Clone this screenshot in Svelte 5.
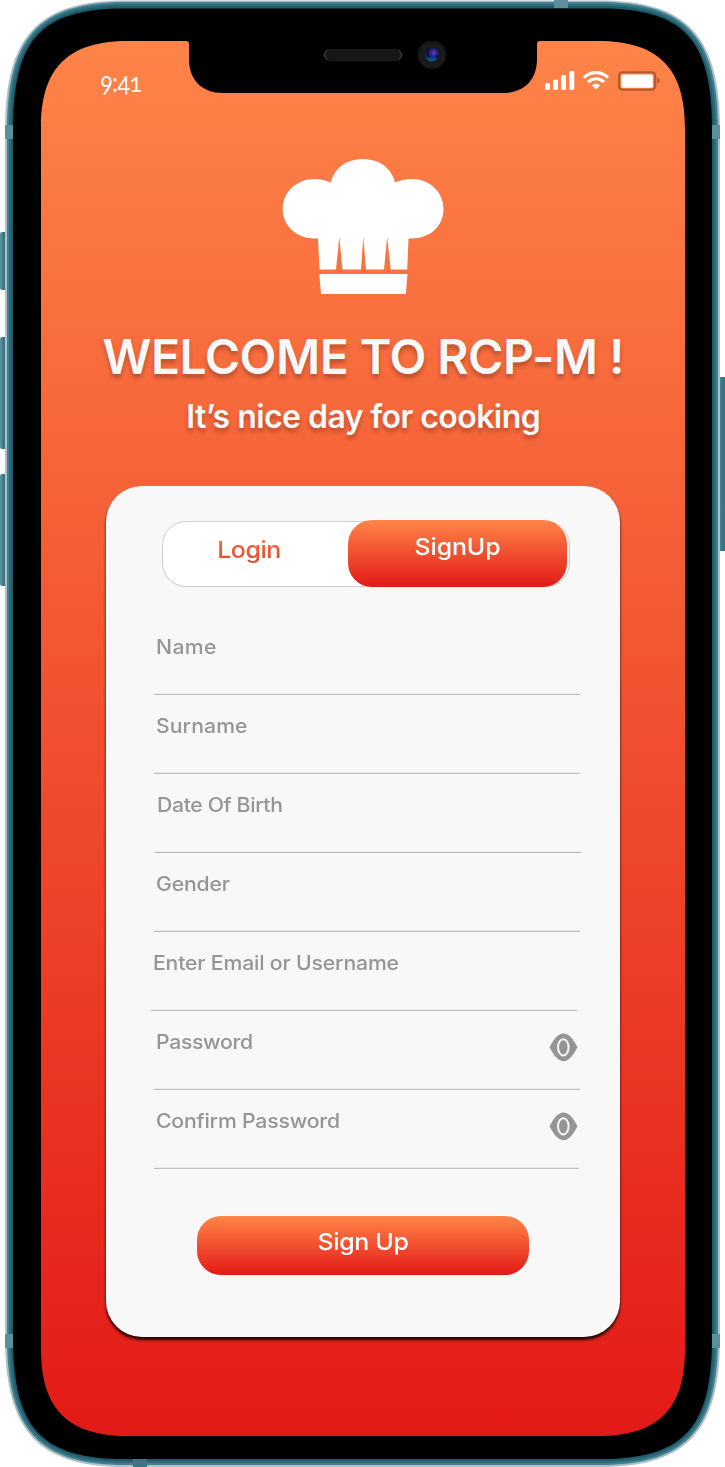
<script>
  const fields = [
    { label: 'Name', width: 60.5, shift: 0 },
    { label: 'Surname', width: 91.5, shift: 0 },
    { label: 'Date Of Birth', width: 126, shift: 1 },
    { label: 'Gender', width: 74, shift: 0 },
    { label: 'Enter Email or Username', width: 246, shift: -3 },
    { label: 'Password', width: 97, shift: 0, secret: true },
    { label: 'Confirm Password', width: 184, shift: 0, secret: true, short: true }
  ];

  // Spreads the letters of a label so that it takes up the given width,
  // after widening or narrowing the glyphs themselves by the stretch factor.
  function track(node, { width, stretch = 1 }) {
    const natural = node.getBoundingClientRect().width;
    const gap = (width / stretch - natural) / (node.textContent.length - 1);
    node.style.letterSpacing = gap + 'px';
    node.style.marginRight = -gap + 'px';
    if (stretch !== 1) node.style.transform = `scaleX(${stretch})`;
  }
</script>

<div class="phone">
  <svg class="frame" viewBox="0 0 725 1467" width="725" height="1467" aria-hidden="true">
    <defs>
      <linearGradient id="screen" x1="0" y1="0" x2="0" y2="1">
        <stop offset="0" stop-color="#fe8448" />
        <stop offset="1" stop-color="#e31a17" />
      </linearGradient>
      <linearGradient id="key" x1="0" y1="0" x2="1" y2="0">
        <stop offset="0" stop-color="#5e97a2" />
        <stop offset=".5" stop-color="#3a7683" />
        <stop offset="1" stop-color="#35717e" />
      </linearGradient>
      <radialGradient id="lens" cx=".62" cy=".35" r=".65">
        <stop offset="0" stop-color="#5546c0" />
        <stop offset=".35" stop-color="#2a2590" />
        <stop offset=".7" stop-color="#0a1138" />
        <stop offset="1" stop-color="#0c3a6c" />
      </radialGradient>
    </defs>
    <g fill="url(#key)">
      <rect x="0" y="232" width="7" height="58" rx="2" />
      <rect x="0" y="337" width="7" height="112" rx="2" />
      <rect x="0" y="474" width="7" height="112" rx="2" />
      <rect x="718" y="377" width="8" height="174" rx="2" />
    </g>
    <path fill="#a9c1c8" d="M5 130C5 37 37 .5 125 .5H600C688 .5 720 37 720 130V1337C720 1430 688 1467 600 1467H125C37 1467 5 1430 5 1337Z" />
    <path fill="#457f8d" d="M7 130C7 38 38 2 125 2H600C687 2 718 38 718 130V1337C718 1429 687 1465 600 1465H125C38 1465 7 1429 7 1337Z" />
    <path fill="#2c6b7a" d="M9 130C9 39 39 4 125 4H600C686 4 716 39 716 130V1337C716 1428 686 1463 600 1463H125C39 1463 9 1428 9 1337Z" />
    <path fill="#1c5c6c" d="M11 130C11 40 40 6 125 6H600C685 6 714 40 714 130V1337C714 1427 685 1461 600 1461H125C40 1461 11 1427 11 1337Z" />
    <g fill="#5b8f9b">
      <rect x="5" y="125" width="8" height="14" />
      <rect x="712" y="125" width="8" height="14" />
      <rect x="5" y="1334" width="8" height="14" />
      <rect x="712" y="1334" width="8" height="14" />
      <rect x="554" y="0" width="14" height="8" />
      <rect x="133" y="1459" width="14" height="8" fill="#3b7584" />
    </g>
    <path d="M13 130C13 39 41 8.5 125 8.5H600C684 8.5 712 39 712 130V1337C712 1428 684 1459 600 1459H125C41 1459 13 1428 13 1337Z" />
    <path fill="url(#screen)" d="M41 128C41 68 68 41 128 41H186Q189 41 189 44V59C189 80 202 93 223 93H503C524 93 537 80 537 59V44Q537 41 540 41H598C658 41 685 68 685 128V1349C685 1409 658 1436 598 1436H128C68 1436 41 1409 41 1349Z" />
    <rect x="324.5" y="49.5" width="77" height="11" rx="5.5" fill="#161616" stroke="#1c1c1c" />
    <path d="M327.500 50.500Q324.500 52 324.500 55T327.500 59.500M398.500 50.500Q401.500 52 401.500 55T398.500 59.500" fill="none" stroke="#555" stroke-width=".8" />
    <circle cx="432" cy="55" r="14" fill="#1a1a1b" />
    <circle cx="432" cy="55" r="7" fill="url(#lens)" />
    <path d="M426 58.500Q432 56 438 58.500Q432 64 426 58.500Z" fill="#126098" opacity=".7" />
  </svg>

  <main>
    <header class="status">
      <span class="clock" use:track={{ width: 42, stretch: 0.88 }}>9:41</span>
      <svg width="116" height="22" viewBox="0 0 116 22" aria-hidden="true">
        <g fill="#fff">
          <rect x="1" y="13" width="5" height="7" rx="1.5" />
          <rect x="9" y="9.500" width="5" height="10.500" rx="1.500" />
          <rect x="17" y="5" width="5" height="15" rx="1.500" />
          <rect x="25.300" y="1" width="5" height="19" rx="1.500" />
          <path d="M52 19.400L47.800 15.200Q52 12.300 56.200 15.200Z" />
        </g>
        <path d="M39.800 7.700C46.500 .9 57.500 .9 64.200 7.700M44 12.100C48.500 7.700 55.500 7.700 60 12.100" fill="none" stroke="#fff" stroke-width="3.100" />
        <rect x="75" y="2.200" width="36.200" height="17.600" rx="3.500" fill="none" stroke="#b0592f" stroke-width="2" />
        <rect x="77.300" y="4.500" width="31.500" height="13.300" rx="1.500" fill="#fff" />
        <path d="M113.300 7.500Q115.600 8.500 115.600 10.500T113.300 13.800Z" fill="#b0592f" />
      </svg>
    </header>

    <svg class="hat" width="162" height="136" viewBox="0 0 162 136" aria-hidden="true">
      <g fill="#fff">
        <path d="M49 24.500C52 10 65 1 81 1S109.500 10 113 24.500C118 22.200 124 21 129.500 21C148 21 161.500 34 161.500 51S148 80.500 129.500 80.500H126.500L125.200 111.500H108.700L105.200 79L102 111.500H84L81.300 79L79 111.500H60.500L57.300 79L54 111.500H37.500L36 80.500H33C14 80.500 .7 67.500 .7 51S14 21 33 21C38.500 21 44 22.200 49 24.500Z" />
        <path d="M37.300 116H125.500L123.800 136H39Z" />
      </g>
    </svg>

    <h1><span use:track={{ width: 522 }}>WELCOME TO RCP-M !</span></h1>
    <p class="tagline"><span use:track={{ width: 354.5 }}>It’s nice day for cooking</span></p>

    <section class="card">
      <div class="tabs">
        <button class="tab login"><span use:track={{ width: 64, stretch: 1.06 }}>Login</span></button>
        <button class="tab active"><span use:track={{ width: 86, stretch: 1.06 }}>SignUp</span></button>
      </div>

      <form>
        {#each fields as field}
          <div class="field" class:early={field.shift < 0} class:late={field.shift > 0} class:short={field.short}>
            <span class="label" use:track={{ width: field.width, stretch: 1.06 }}>{field.label}</span>
            {#if field.secret}
              <svg class="eye" width="29" height="29" viewBox="0 0 29 29" aria-hidden="true">
                <path d="M.5 14.300C5 5.500 9.500 .5 14.500 .5S24 5.500 28.500 14.300C24 23 19.500 28.300 14.500 28.300S5 23 .5 14.300Z" fill="#959595" />
                <ellipse cx="14.300" cy="14.300" rx="5.300" ry="8.100" fill="none" stroke="#f8f8f8" stroke-width="2" />
              </svg>
            {/if}
          </div>
        {/each}
        <button type="button" class="submit"><span use:track={{ width: 91.5, stretch: 1.06 }}>Sign Up</span></button>
      </form>
    </section>
  </main>
</div>

<style>
  :global(body) {
    background: #fff;
  }
  .phone {
    position: relative;
    width: 725px;
    height: 1467px;
    overflow: hidden;
    font-family: Inter, sans-serif;
  }
  .frame {
    position: absolute;
    inset: 0;
  }
  main {
    position: relative;
    box-sizing: border-box;
    height: 1467px;
    padding-top: 70px;
    display: flex;
    flex-direction: column;
    align-items: center;
  }
  .status {
    width: 560px;
    height: 30px;
    margin-right: -35px;
    display: flex;
    justify-content: space-between;
    align-items: flex-start;
  }
  .clock {
    margin-top: -1.500px;
    font: 400 27px/26px Lato, sans-serif;
    font-variant-numeric: oldstyle-nums;
    color: #fff;
    transform-origin: left;
  }
  .hat {
    margin: 58px 0 0 0;
  }
  h1, p {
    margin: 0 0 0 2px;
    color: #f8f8f8;
    white-space: nowrap;
    text-shadow: 0 4px 4px rgba(0, 0, 0, 0.25);
  }
  h1 {
    margin-top: 34px;
    font-size: 48px;
    font-weight: 600;
    line-height: 58px;
  }
  .tagline {
    margin-top: 11px;
    font-size: 32px;
    font-weight: 600;
    line-height: 39px;
  }
  .card {
    box-sizing: border-box;
    width: 514px;
    height: 851px;
    margin: 50px 0 0 1px;
    padding-top: 34px;
    border-radius: 36px;
    background: #f8f8f8;
    box-shadow: 0 3px 3px rgba(0, 0, 0, 0.85);
  }
  button {
    border: 0;
    padding: 0;
    font: 500 23.500px/30px Inter, sans-serif;
    color: #fff;
    background: none;
    white-space: nowrap;
  }
  button span {
    display: inline-block;
  }
  .tabs {
    box-sizing: border-box;
    width: 408px;
    height: 66px;
    margin: 1px 0 0 56px;
    border: 1px solid #ccc;
    border-radius: 24px;
    background: #fff;
    display: flex;
  }
  .tab {
    display: flex;
    justify-content: center;
    align-items: flex-start;
  }
  .login {
    width: 185px;
    padding-top: 13px;
  }
  .login span {
    margin-left: -12px;
    background: linear-gradient(#f76f3e, #e8402a);
    background-clip: text;
    -webkit-background-clip: text;
    color: transparent;
  }
  .active {
    width: 219px;
    height: 67px;
    margin-top: -2px;
    padding-top: 12px;
    border-radius: 24px;
    background: linear-gradient(#ff8548, #e31a17);
  }
  form {
    margin: 29px 0 0 48px;
  }
  .field {
    box-sizing: border-box;
    width: 425.500px;
    height: 79px;
    padding: 18px 1.500px 0;
    border-bottom: 1px solid #bdbdbd;
    display: flex;
    justify-content: space-between;
    align-items: flex-start;
    box-shadow: inset 0 -1px #ebebeb;
  }
  .early {
    margin-left: -3px;
  }
  .late {
    margin-left: 1px;
  }
  .short {
    width: 425px;
  }
  .label {
    font-size: 20px;
    font-weight: 500;
    line-height: 26px;
    color: #959595;
    white-space: nowrap;
    transform-origin: left;
  }
  .eye {
    margin-top: 4px;
  }
  .submit {
    display: block;
    width: 332px;
    height: 59px;
    margin: 47px 0 0 43px;
    padding-bottom: 8px;
    border-radius: 24px;
    background: linear-gradient(#ff8548, #e31a17);
  }
</style>
